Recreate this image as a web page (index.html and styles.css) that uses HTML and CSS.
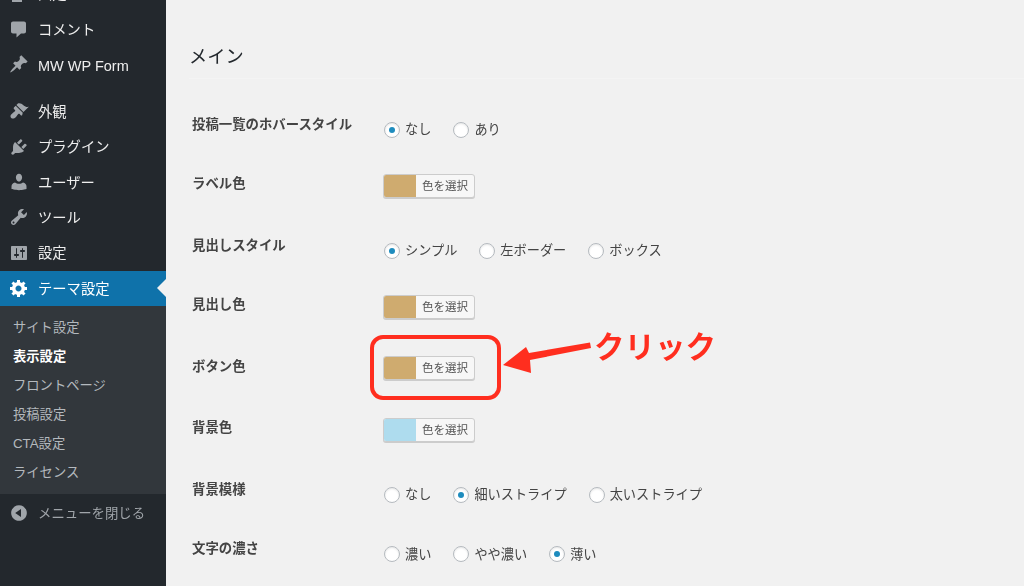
FILE: index.html
```html
<!DOCTYPE html>
<html lang="ja">
<head>
<meta charset="utf-8">
<title>テーマ設定</title>
<link rel="stylesheet" href="styles.css">
</head>
<body>
<div class="page">
  <aside class="sidebar">
    <ul class="menu">
      <li class="item"><svg class="ico" viewBox="0 0 20 20"><path d="M6 15V2h10v13H6zm-1 1h8v2H3V5h2v11z"/></svg>固定ページ</li>
      <li class="item"><svg class="ico" viewBox="0 0 20 20"><path d="M4 2.5h11c1.1 0 2 .9 2 2v8c0 1.1-.9 2-2 2h-3l-4.5 4v-4H4c-1.1 0-2-.9-2-2v-8c0-1.1.9-2 2-2z"/></svg>コメント</li>
      <li class="item"><svg class="ico" viewBox="0 0 20 20"><path d="M10.44 3.02l1.82-1.82 6.36 6.35-1.83 1.82c-1.05-.68-2.48-.57-3.41.36l-.75.75c-.92.93-1.04 2.35-.35 3.41l-1.83 1.82-2.41-2.41-2.8 2.79c-.42.42-3.38 2.71-3.8 2.29s1.86-3.39 2.28-3.81l2.79-2.79L4.1 9.36l1.83-1.82c1.05.69 2.48.57 3.4-.36l.75-.75c.93-.92 1.05-2.35.36-3.41z"/></svg><span class="latin">MW WP Form</span></li>
      <li class="item sep"><svg class="ico" viewBox="0 0 20 20"><path d="M14.48 11.06L7.41 3.99l1.5-1.5c.5-.56 2.3-.47 3.51.32 1.21.8 1.43 1.28 2.91 2.1 1.18.64 2.45 1.26 4.45.85zm-.71.71L6.7 4.7 4.93 6.47c-.39.39-.39 1.02 0 1.41l1.06 1.06c.39.39.39 1.03 0 1.42-.6.6-1.43 1.11-2.21 1.69-.35.26-.7.53-1.01.84C1.43 13.71.96 15.65 2.2 16.89s3.17.77 4.52-.58c.3-.31.58-.66.84-1.01.58-.78 1.09-1.61 1.69-2.21.39-.39 1.02-.39 1.41 0l1.06 1.06c.39.39 1.02.39 1.41 0z"/></svg>外観</li>
      <li class="item"><svg class="ico" viewBox="0 0 20 20"><path d="M13.11 4.36L9.87 7.6 8 5.73l3.24-3.24c.35-.34 1.05-.2 1.56.32.52.51.66 1.21.31 1.55zm-8 1.77l.91-1.12 9.01 9.01-1.19.84c-.71.71-2.63 1.16-3.82 1.16H6.14L4.9 17.26c-.59.59-1.54.59-2.12 0-.59-.58-.59-1.53 0-2.12l1.24-1.24v-3.88c0-1.13.4-3.19 1.09-3.89zm7.26 3.97l3.24-3.24c.34-.35 1.04-.21 1.55.31.52.51.66 1.21.31 1.55l-3.24 3.25z"/></svg>プラグイン</li>
      <li class="item"><svg class="ico" viewBox="0 0 20 20"><path d="M10 9.6c-2.4 0-3.1-3.3-3.1-4.1C6.9 3.6 8 1.8 10 1.8s3.1 1.8 3.1 3.7c0 .8-.7 4.1-3.1 4.1zM6 10.4c1 .8 2.5 1.3 4 1.3s3-.5 4-1.3c2.2.3 3.5 2 3.5 4.1v2.6s-3.600 1.1-7.500 1.100-7.500-1.100-7.500-1.100v-2.600c0-2.100 1.300-3.800 3.500-4.100z"/></svg>ユーザー</li>
      <li class="item"><svg class="ico" viewBox="0 0 20 20"><path d="M16.68 9.77c-1.34 1.34-3.3 1.67-4.95.99l-5.41 6.52c-.99.99-2.59.99-3.58 0s-.99-2.59 0-3.57l6.52-5.42c-.68-1.65-.35-3.61.99-4.95 1.28-1.28 3.12-1.62 4.72-1.06l-2.89 2.89 2.82 2.82 2.86-2.87c.53 1.58.18 3.39-1.08 4.65zM3.81 16.21c.4.39 1.04.39 1.43 0 .4-.4.4-1.04 0-1.43-.39-.4-1.03-.4-1.43 0-.39.39-.39 1.03 0 1.43z"/></svg>ツール</li>
      <li class="item"><svg class="ico" viewBox="0 0 20 20"><path d="M18 16V4c0-.55-.45-1-1-1H3c-.55 0-1 .45-1 1v12c0 .55.45 1 1 1h14c.55 0 1-.45 1-1zM8 11h1c.55 0 1 .45 1 1s-.45 1-1 1H8v1.500c0 .28-.22.5-.5.5s-.5-.22-.5-.5V13H6c-.55 0-1-.45-1-1s.45-1 1-1h1V5.500c0-.28.22-.5.5-.5s.5.22.5.5V11zm5-2h-1c-.55 0-1-.45-1-1s.45-1 1-1h1V5.500c0-.28.22-.5.5-.5s.5.22.5.5V7h1c.55 0 1 .45 1 1s-.45 1-1 1h-1v5.500c0 .28-.22.5-.5.5s-.5-.22-.5-.5V9z"/></svg>設定</li>
      <li class="item active"><svg class="ico" viewBox="0 0 20 20"><path d="M18 12h-2.18c-.17.7-.44 1.35-.81 1.93l1.54 1.54-2.1 2.1-1.54-1.54c-.58.36-1.23.63-1.91.79V19H8v-2.18c-.68-.16-1.33-.43-1.91-.79l-1.54 1.54-2.12-2.12 1.54-1.54c-.36-.58-.63-1.23-.79-1.91H1V9.03h2.17c.16-.7.44-1.35.8-1.94L2.43 5.55l2.1-2.1 1.54 1.54c.58-.37 1.24-.64 1.93-.81V2h3v2.18c.68.16 1.33.43 1.91.79l1.54-1.54 2.12 2.12-1.54 1.54c.36.59.64 1.24.8 1.94H18V12zm-8.5 1.5c1.66 0 3-1.34 3-3s-1.34-3-3-3-3 1.34-3 3 1.34 3 3 3z"/></svg>テーマ設定</li>
    </ul>
    <ul class="submenu">
      <li>サイト設定</li>
      <li class="current">表示設定</li>
      <li>フロントページ</li>
      <li>投稿設定</li>
      <li>CTA設定</li>
      <li>ライセンス</li>
    </ul>
    <div class="collapse"><svg class="ico" viewBox="0 0 20 20"><path d="M10 2.16c4.33 0 7.84 3.51 7.84 7.84s-3.51 7.84-7.84 7.84S2.16 14.33 2.16 10 5.71 2.16 10 2.16zm2 11.72V6.12L6.18 9.97z"/></svg>メニューを閉じる</div>
  </aside>

  <main class="content">
    <h2 class="title">メイン</h2>
    <div class="row row-radio">
      <div class="label">投稿一覧のホバースタイル</div>
      <div class="field">
        <span class="opt"><i class="radio on"></i>なし</span>
        <span class="opt"><i class="radio"></i>あり</span>
      </div>
    </div>
    <div class="row row-color">
      <div class="label">ラベル色</div>
      <div class="field"><span class="color"><i class="swatch tan"></i><span class="pick">色を選択</span></span></div>
    </div>
    <div class="row row-radio">
      <div class="label">見出しスタイル</div>
      <div class="field">
        <span class="opt"><i class="radio on"></i>シンプル</span>
        <span class="opt"><i class="radio"></i>左ボーダー</span>
        <span class="opt"><i class="radio"></i>ボックス</span>
      </div>
    </div>
    <div class="row row-color">
      <div class="label">見出し色</div>
      <div class="field"><span class="color"><i class="swatch tan"></i><span class="pick">色を選択</span></span></div>
    </div>
    <div class="row row-color">
      <div class="label">ボタン色</div>
      <div class="field"><span class="color"><i class="swatch tan"></i><span class="pick">色を選択</span></span></div>
    </div>
    <div class="row row-color">
      <div class="label">背景色</div>
      <div class="field"><span class="color"><i class="swatch blue"></i><span class="pick">色を選択</span></span></div>
    </div>
    <div class="row row-radio">
      <div class="label">背景模様</div>
      <div class="field">
        <span class="opt"><i class="radio"></i>なし</span>
        <span class="opt"><i class="radio on"></i>細いストライプ</span>
        <span class="opt"><i class="radio"></i>太いストライプ</span>
      </div>
    </div>
    <div class="row row-radio">
      <div class="label">文字の濃さ</div>
      <div class="field">
        <span class="opt"><i class="radio"></i>濃い</span>
        <span class="opt"><i class="radio"></i>やや濃い</span>
        <span class="opt"><i class="radio on"></i>薄い</span>
      </div>
    </div>
  </main>

  <div class="callout-box"></div>
  <svg class="callout-arrow" viewBox="0 0 100 40"><path d="M1 25 L24 7 L27 13 L88 2.500 L89 8 L28 20 L29 33 Z"/></svg>
  <div class="callout-text">クリック</div>
</div>
</body>
</html>
```
FILE: styles.css
```css
* { box-sizing: border-box; }
html, body { margin: 0; padding: 0; height: 100%; overflow: hidden; }
body {
  background: #f1f1f1;
  font-family: "Liberation Sans", "Noto Sans CJK JP", sans-serif;
}
.page {
  position: relative;
  display: flex;
  width: 1024px;
  height: 586px;
  overflow: hidden;
  filter: blur(0.3px);
}
ul { list-style: none; margin: 0; padding: 0; }

/* Sidebar */
.sidebar {
  flex: 0 0 166px;
  height: 586px;
  background: #23282d;
  display: flex;
  flex-direction: column;
}
.menu { margin-top: -24px; }
.item {
  position: relative;
  display: flex;
  align-items: center;
  height: 35.4px;
  padding: 0 0 2px 9px;
  color: #eee;
  font-size: 14.3px;
}
.sep { margin-top: 11.4px; }
.ico {
  flex: 0 0 20px;
  width: 20px;
  height: 20px;
  margin: 2px 9px 0 0;
  fill: #a0a5aa;
}
.latin { margin-top: 5px; font-size: 14.5px; }
.active { background: #0f72aa; color: #fff; }
.active .ico { fill: #fff; }
.active::after {
  content: "";
  position: absolute;
  right: 0;
  top: 50%;
  margin-top: -9px;
  border: 9px solid transparent;
  border-right-color: #f1f1f1;
  border-left-width: 0;
}
.submenu {
  background: #32373c;
  padding: 7px 0 7.5px;
}
.submenu li {
  height: 29px;
  line-height: 29px;
  padding-left: 13px;
  font-size: 13.3px;
  color: #b4b9be;
}
.submenu .current { color: #fff; font-weight: 700; }
.collapse {
  display: flex;
  align-items: center;
  height: 36px;
  padding-left: 9px;
  font-size: 13.4px;
  color: #a0a5aa;
}

/* Content */
.content {
  flex: 1;
  padding: 45px 0 0 26px;
  color: #444;
}
.title {
  margin: 0 0 35px -3px;
  height: 34px;
  line-height: 24px;
  font-size: 18.2px;
  font-weight: 400;
  color: #23282d;
  border-bottom: 1px solid #f4f4f4;
}
.row { display: flex; align-items: flex-start; }
.row-radio { height: 59.5px; }
.row-color { height: 61.5px; }
.label {
  flex: 0 0 191px;
  padding-top: 0.5px;
  font-size: 13.4px;
  font-weight: 700;
  line-height: 20px;
  color: #444;
}
.row-radio .field { padding: 5.500px 0 0 1px; }
.field { display: flex; align-items: center; }
.opt {
  display: flex;
  align-items: center;
  margin-right: 22px;
  height: 20px;
  padding-bottom: 2px;
  font-size: 13.2px;
  color: #444;
}
.radio {
  position: relative;
  width: 16px;
  height: 16px;
  margin: 2px 5px 0 0;
  background: #fff;
  border: 1px solid #b4b9be;
  border-radius: 50%;
  box-shadow: inset 0 1px 2px rgba(0,0,0,.1);
}
.radio.on::before {
  content: "";
  position: absolute;
  left: 4px;
  top: 4px;
  width: 6px;
  height: 6px;
  border-radius: 50%;
  background: #1e8cbe;
}
.color {
  display: flex;
  width: 92px;
  height: 24px;
  background: #f7f7f7;
  border: 1px solid #ccc;
  border-radius: 3px;
  box-shadow: 0 1px 0 #ccc;
  overflow: hidden;
}
.swatch { flex: 0 0 32px; }
.tan { background: #cfab6f; }
.blue { background: #aedcee; }
.pick {
  flex: 1;
  text-align: center;
  font-size: 11.5px;
  line-height: 22px;
  color: #555;
}

/* Annotation overlay */
.callout-box {
  position: absolute;
  left: 370px;
  top: 335px;
  width: 131px;
  height: 65px;
  border: 4.5px solid #ff2e1f;
  border-radius: 13px;
}
.callout-arrow {
  position: absolute;
  left: 502px;
  top: 340px;
  width: 100px;
  height: 40px;
  fill: #ff2e1f;
}
.callout-text {
  position: absolute;
  left: 594px;
  top: 325px;
  font-size: 30.5px;
  line-height: 44px;
  font-weight: 700;
  color: #ff2e1f;
  white-space: nowrap;
}
```
